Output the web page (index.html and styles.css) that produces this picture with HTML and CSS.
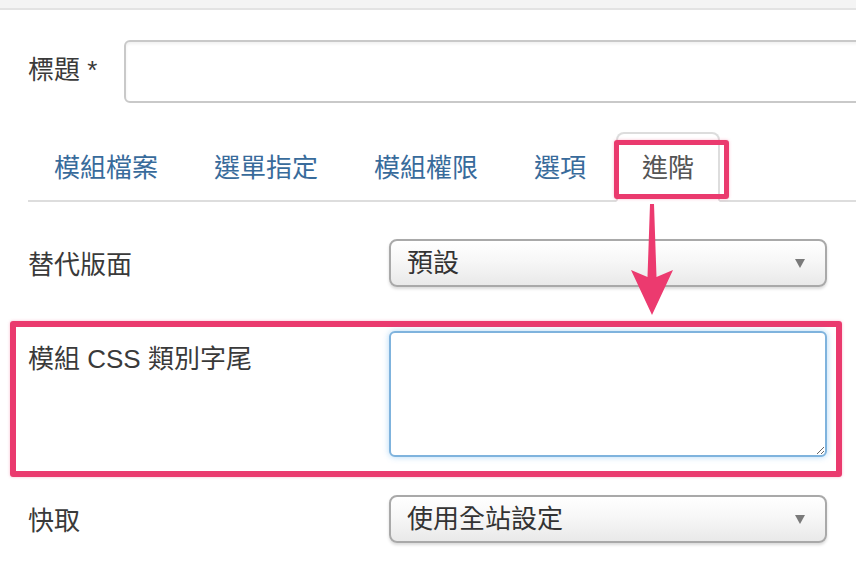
FILE: index.html
```html
<!DOCTYPE html>
<html lang="zh-Hant">
<head>
<meta charset="utf-8">
<title>模組設定</title>
<link rel="stylesheet" href="styles.css">
</head>
<body>
<div class="topbar"></div>
<div class="page">
  <div class="title-row">
    <label class="title-label">標題 *</label>
    <input class="title-input" type="text">
  </div>

  <ul class="tabs">
    <li class="tab"><a>模組檔案</a></li>
    <li class="tab"><a>選單指定</a></li>
    <li class="tab"><a>模組權限</a></li>
    <li class="tab"><a>選項</a></li>
    <li class="tab active"><a>進階</a></li>
  </ul>

  <div class="form">
    <div class="row row-center">
      <label class="label label-mid">替代版面</label>
      <div class="select"><span>預設</span><i class="caret"></i></div>
    </div>

    <div class="highlight">
      <div class="row">
        <label class="label label-top">模組 CSS 類別字尾</label>
        <textarea class="textarea"></textarea>
      </div>
    </div>

    <div class="row row-center row-last">
      <label class="label label-mid">快取</label>
      <div class="select"><span>使用全站設定</span><i class="caret"></i></div>
    </div>
  </div>

  <div class="tab-mark"></div>
  <svg class="arrow" width="50" height="120" viewBox="0 0 50 120">
    <path d="M22 4 L26 4 L28.5 77 L45 70 L24 115 L3 70 L19.5 77 Z" fill="#ec3a6f"/>
  </svg>
</div>
</body>
</html>
```

FILE: styles.css
```css
html, body {
  margin: 0;
  padding: 0;
  background: #ffffff;
  overflow: hidden;
}

body {
  width: 856px;
  height: 570px;
  font-family: "Liberation Sans", "Noto Sans CJK TC", sans-serif;
  font-size: 26px;
  line-height: 30px;
  color: #3a3a3a;
}

.topbar {
  height: 8px;
  background: #f4f4f4;
  border-bottom: 2px solid #e3e3e3;
}

.page {
  position: relative;
  padding: 30px 0 0 28px;
}

.title-row {
  display: flex;
  align-items: center;
  margin-right: -40px;
}

.title-label {
  width: 96px;
  flex: none;
  color: #3a3a3a;
  position: relative;
  top: -2px;
}

.title-input {
  flex: 1;
  height: 63px;
  box-sizing: border-box;
  border: 2px solid #c9c9c9;
  border-radius: 6px;
  box-shadow: inset 0 2px 3px rgba(0, 0, 0, 0.06);
  background: #fff;
  margin: 0;
  padding: 0 12px;
  font: inherit;
  outline: none;
}

.tabs {
  list-style: none;
  margin: 29px 0 0 0;
  padding: 0;
  display: flex;
  border-bottom: 2px solid #dddddd;
}

.tab {
  margin-bottom: -2px;
  margin-right: 4px;
}

.tab a {
  display: block;
  padding: 19px 24px 17px;
  border: 2px solid transparent;
  border-radius: 8px 8px 0 0;
  color: #386b9b;
  line-height: 30px;
}

.tab.active a {
  color: #555555;
  border-color: #dddddd #dddddd transparent;
  background: #fff;
}

.form {
  padding-right: 29px;
  margin-top: 37px;
}

.row {
  display: flex;
  align-items: flex-start;
}

.row-center {
  align-items: center;
}

.label {
  width: 361px;
  flex: none;
  color: #3a3a3a;
}

.label-mid {
  padding-top: 4px;
}

.label-top {
  padding-top: 13px;
}

.select {
  flex: 1;
  height: 48px;
  box-sizing: border-box;
  border: 2px solid #a9a9a9;
  border-radius: 8px;
  background: linear-gradient(#ffffff 0%, #f7f7f7 45%, #e9e9e9 100%);
  box-shadow: 0 2px 3px rgba(0, 0, 0, 0.15);
  display: flex;
  align-items: center;
  justify-content: space-between;
  padding: 0 20px 0 16px;
  color: #333;
}

.caret {
  width: 0;
  height: 0;
  border-left: 5px solid transparent;
  border-right: 5px solid transparent;
  border-top: 9px solid #7a7a7a;
}

.highlight {
  margin: 34px -15px 0 -18px;
  border: 6px solid #ea3a6e;
  border-radius: 3px;
  padding: 4px 9px 14px 12px;
  box-shadow: 0 0 3px rgba(234, 58, 110, 0.35);
}

.textarea {
  flex: 1;
  height: 126px;
  box-sizing: border-box;
  margin: 0;
  border: 2px solid #7fb3dd;
  border-radius: 6px;
  box-shadow: 0 0 6px rgba(82, 168, 236, 0.45);
  outline: none;
  font: inherit;
  padding: 8px;
  resize: both;
}

.row-last {
  margin-top: 18px;
}

.tab-mark {
  position: absolute;
  left: 614px;
  top: 130px;
  width: 105px;
  height: 49px;
  border: 5px solid #ea3a6e;
  border-radius: 3px;
  box-shadow: 0 0 3px rgba(234, 58, 110, 0.35);
}

.arrow {
  position: absolute;
  left: 628px;
  top: 190px;
}
```
